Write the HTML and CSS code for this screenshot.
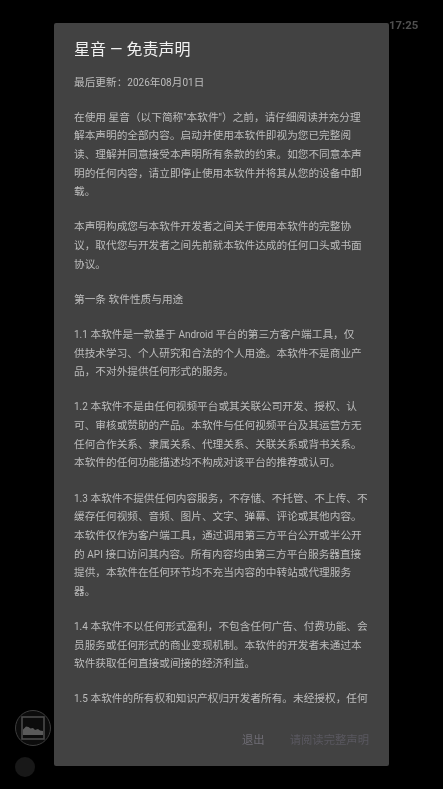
FILE: index.html
```html
<!DOCTYPE html>
<html lang="zh-CN">
<head>
<meta charset="utf-8">
<title>星音</title>
<link rel="stylesheet" href="styles.css">
</head>
<body>
<div class="clock">17:25</div>
<div class="dock">
  <div class="thumb">
    <svg class="thumb-icon" viewBox="0 0 24 24" aria-hidden="true">
      <rect x="1" y="1" width="22" height="22" fill="none" stroke="#4a4a4a" stroke-width="1.6"/>
      <path d="M2 19V13.5L5 10.5L7.5 11L9.5 12.5L12 12L14 14L17 13L19 14.5L22 15V19Z" fill="#5a5a5a"/>
    </svg>
  </div>
  <div class="dot"></div>
</div>
<section class="dialog">
  <h1 class="title">星音 — 免责声明</h1>
  <div class="body">
    <p>最后更新：<span class="lat">2026</span>年<span class="lat">08</span>月<span class="lat">01</span>日</p>
    <p>在使用 星音（以下简称"本软件"）之前，请仔细阅读并充分理解本声明的全部内容。启动并使用本软件即视为您已完整阅读、理解并同意接受本声明所有条款的约束。如您不同意本声明的任何内容，请立即停止使用本软件并将其从您的设备中卸载。</p>
    <p>本声明构成您与本软件开发者之间关于使用本软件的完整协议，取代您与开发者之间先前就本软件达成的任何口头或书面协议。</p>
    <p>第一条 软件性质与用途</p>
    <p><span class="lat">1.1</span> 本软件是一款基于 <span class="lat">Android</span> 平台的第三方客户端工具，仅<br>供技术学习、个人研究和合法的个人用途。本软件不是商业产品，不对外提供任何形式的服务。</p>
    <p><span class="lat">1.2</span> 本软件不是由任何视频平台或其关联公司开发、授权、认<br>可、审核或赞助的产品。本软件与任何视频平台及其运营方无任何合作关系、隶属关系、代理关系、关联关系或背书关系。本软件的任何功能描述均不构成对该平台的推荐或认可。</p>
    <p><span class="lat">1.3</span> 本软件不提供任何内容服务，不存储、不托管、不上传、不缓存任何视频、音频、图片、文字、弹幕、评论或其他内容。本软件仅作为客户端工具，通过调用第三方平台公开或半公开的 <span class="lat">API</span> 接口访问其内容。所有内容均由第三方平台服务器直接提供，本软件在任何环节均不充当内容的中转站或代理服务器。</p>
    <p><span class="lat">1.4</span> 本软件不以任何形式盈利，不包含任何广告、付费功能、会员服务或任何形式的商业变现机制。本软件的开发者未通过本软件获取任何直接或间接的经济利益。</p>
    <p><span class="lat">1.5</span> 本软件的所有权和知识产权归开发者所有。未经授权，任何</p>
  </div>
  <div class="actions">
    <span class="btn-exit">退出</span>
    <span class="btn-read">请阅读完整声明</span>
  </div>
</section>
</body>
</html>
```
FILE: styles.css
```css
html, body {
  margin: 0;
  height: 100%;
  background: #000;
  overflow: hidden;
}
body {
  font-family: Roboto, "Noto Sans CJK SC", sans-serif;
  filter: blur(0.3px);
}
.clock {
  position: absolute;
  left: 389px;
  top: 18px;
  font-size: 11.33px;
  line-height: 15px;
  font-weight: 700;
  color: #4f4f4f;
}
.dock {
  position: absolute;
  left: 15px;
  top: 710px;
  display: flex;
  flex-direction: column;
  gap: 11px;
}
.thumb {
  box-sizing: border-box;
  width: 36px;
  height: 36px;
  border: 1.5px solid #3c3c3c;
  border-radius: 50%;
  background: #0c0c0c;
  display: flex;
  align-items: center;
  justify-content: center;
}
.thumb-icon {
  width: 24px;
  height: 24px;
}
.dot {
  width: 20px;
  height: 20px;
  border-radius: 50%;
  background: #181818;
}
.dialog {
  position: absolute;
  left: 54px;
  top: 23px;
  width: 335px;
  height: 743px;
  box-sizing: border-box;
  background: #424242;
  border-radius: 2px;
  display: flex;
  flex-direction: column;
}
.title {
  margin: 0;
  padding: 15px 20px 0;
  font-size: 16px;
  line-height: 24px;
  font-weight: 400;
  color: #f0f0f0;
}
.body {
  margin: 11.5px 20px 0 20px;
  width: 296px;
  height: 634px;
  overflow: hidden;
  font-size: 10.67px;
  line-height: 18.67px;
  color: #bdbdbd;
}
.body p {
  margin: 0 0 16.45px;
}
.body p:last-child {
  margin-bottom: 0;
}
.lat {
  font-size: 10px;
}
.actions {
  display: flex;
  justify-content: flex-end;
  gap: 25px;
  padding: 23px 20px 0;
  font-size: 11.33px;
  line-height: 18px;
}
.btn-exit {
  color: #6f6d75;
}
.btn-read {
  color: #5a5860;
}
```
